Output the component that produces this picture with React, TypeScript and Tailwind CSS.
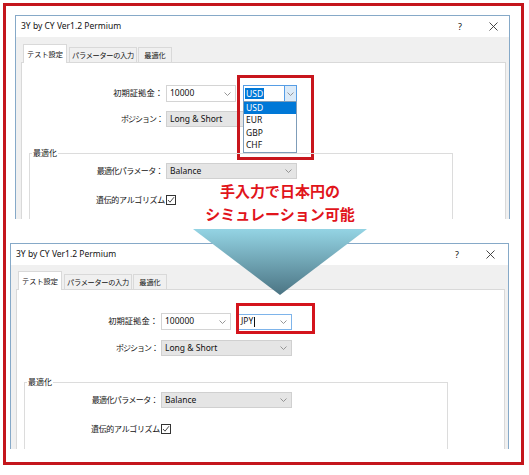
import React from 'react';

const FONT = "font-['Noto_Sans','Noto_Sans_CJK_JP',sans-serif]";

function Chevron() {
  return (
    <svg width="7" height="4" viewBox="0 0 7 4" className="shrink-0">
      <polyline points="0.5,0.5 3.5,3.5 6.5,0.5" fill="none" stroke="#8a8a8a" strokeWidth="0.9" />
    </svg>
  );
}

function CloseIcon() {
  return (
    <svg width="9" height="9" viewBox="0 0 9 9">
      <path d="M0.5 0.5 L8.5 8.5 M8.5 0.5 L0.5 8.5" stroke="#333" strokeWidth="0.9" fill="none" />
    </svg>
  );
}

function CheckBox() {
  return (
    <div className="flex h-[10px] w-[10px] shrink-0 items-center justify-center border border-[#333] bg-white">
      <svg width="8" height="8" viewBox="0 0 8 8">
        <polyline points="1,4 3,6.2 7,1.2" fill="none" stroke="#333" strokeWidth="0.9" />
      </svg>
    </div>
  );
}

function Combo({ value, width }: { value: string; width: string }) {
  return (
    <div className={`flex h-[17px] ${width} items-center justify-between border border-[#d4d4d4] bg-white pl-[3px] pr-[4px] text-[8.5px] text-[#111]`}>
      <span>{value}</span>
      <Chevron />
    </div>
  );
}

function Select({ value }: { value: string }) {
  return (
    <div className="flex h-[16px] w-[131px] items-center justify-between border border-[#d0d0d0] bg-[#e5e5e5] pl-[3px] pr-[4px] text-[8.5px] text-[#111]">
      <span>{value}</span>
      <Chevron />
    </div>
  );
}

function CurrencyOpen() {
  return (
    <div className="relative h-[17px] w-[54px]">
      <div className="flex h-full w-full items-center border border-[#569de5] bg-white text-[8.5px]">
        <span className="ml-[1px] bg-[#0078d7] px-[1px] leading-[11px] text-white">USD</span>
        <div className="ml-auto flex h-full w-[12px] items-center justify-center border-l border-[#569de5] bg-[#dbeaf8]">
          <Chevron />
        </div>
      </div>
      <div className="absolute left-0 top-[16px] flex w-[54px] flex-col border border-[#7f9db9] bg-white text-[8.5px] text-[#111]">
        <div className="h-[12px] bg-[#0078d7] pl-[2px] leading-[12px] text-white">USD</div>
        <div className="h-[12.5px] pl-[2px] leading-[12.5px]">EUR</div>
        <div className="h-[12.5px] pl-[2px] leading-[12.5px]">GBP</div>
        <div className="h-[12.5px] pl-[2px] leading-[12.5px]">CHF</div>
      </div>
      <div className="absolute left-[-6px] top-[-10px] h-[85px] w-[77px] border-[3px] border-[#c8161d]" />
    </div>
  );
}

function CurrencyJPY() {
  return (
    <div className="relative h-[16px] w-[54px]">
      <div className="flex h-full w-full items-center justify-between border border-[#7eb4ea] bg-white pl-[2px] pr-[4px] text-[8.5px] text-[#111]">
        <span className="flex items-center">
          JPY<span className="ml-[0.5px] inline-block h-[10px] w-px bg-[#111]" />
        </span>
        <Chevron />
      </div>
      <div className="absolute left-[-2px] top-[-11px] h-[31px] w-[79px] border-[3px] border-[#d4141c]" />
    </div>
  );
}

function Dialog({ variant }: { variant: 'top' | 'bottom' }) {
  const top = variant === 'top';
  return (
    <div
      className={`flex flex-col overflow-hidden border border-b-0 border-[#86a9c8] bg-[#f0f0f0] ${
        top ? 'ml-[9px] mt-[9px] h-[204px] w-[495px]' : 'ml-[4px] mt-[24px] h-[206px] w-[499px]'
      }`}
    >
      <div className={`flex h-[21px] shrink-0 items-center bg-white pl-[5px] text-[8.5px] text-[#111] ${top ? 'pr-[11px]' : 'pr-[13px]'}`}>
        <span>3Y by CY Ver1.2 Permium</span>
        <span className="ml-auto mr-[27px] text-[9px]">?</span>
        <CloseIcon />
      </div>
      <div className={`flex shrink-0 items-end whitespace-nowrap pl-[7px] text-[7.2px] text-[#111] ${top ? 'h-[25px]' : 'h-[24px]'}`}>
        <div className="relative z-10 -mb-px flex h-[19px] w-[44px] items-center justify-center border border-b-0 border-[#d9d9d9] bg-white">
          テスト設定
        </div>
        <div className="ml-[2px] flex h-[15px] w-[68px] items-center justify-center border border-b-0 border-[#d9d9d9] bg-[#f0f0f0] tracking-[-0.3px]">
          パラメーターの入力
        </div>
        <div className="ml-[1px] flex h-[15px] w-[34px] items-center justify-center border border-b-0 border-[#d9d9d9] bg-[#f0f0f0]">
          最適化
        </div>
      </div>
      <div className="ml-[5px] mr-[3px] flex flex-1 flex-col border border-[#d9d9d9] bg-white text-[8px] text-[#111]">
        <div className={`flex items-center ${top ? 'mt-[22px]' : 'mt-[23px]'}`}>
          <div className="w-[144px] pr-[3px] text-right text-[8.3px]">初期証拠金：</div>
          <Combo value={top ? '10000' : '100000'} width="w-[70px]" />
          <div className="ml-[7px]">{top ? <CurrencyOpen /> : <CurrencyJPY />}</div>
        </div>
        <div className={`flex items-center ${top ? 'mt-[9px]' : 'mt-[10px]'}`}>
          <div className="w-[144px] pr-[3px] text-right tracking-[-1px]">ポジション：</div>
          <Select value="Long & Short" />
        </div>
        <div className="relative ml-[7px] mt-[26px] h-[120px] w-[424px] shrink-0 border border-[#dcdcdc]">
          <span className="absolute left-[2px] top-[-7px] bg-white px-[1px] leading-[12px]">最適化</span>
          <div className="mt-[9px] flex items-center">
            <div className="w-[136px] pr-[3px] text-right tracking-[-0.6px]">最適化パラメータ：</div>
            <Select value="Balance" />
          </div>
          <div className="mt-[15px] flex items-center">
            <div className="w-[136px] pr-[1px] text-right tracking-[-0.3px]">遺伝的アルゴリズム</div>
            <CheckBox />
          </div>
        </div>
      </div>
    </div>
  );
}

export default function App() {
  return (
    <div className={`h-[475px] w-[529px] bg-white pl-[3px] pt-[3px] ${FONT}`}>
      <div className="relative h-[462px] w-[521px] border-[3px] border-[#c4161c] bg-white">
        <Dialog variant="top" />
        <Dialog variant="bottom" />
        <svg className="absolute left-[187px] top-[223px]" width="174" height="66" viewBox="0 0 174 66">
          <defs>
            <linearGradient id="tri" x1="0" y1="0" x2="0" y2="1">
              <stop offset="0" stopColor="#94d4e4" />
              <stop offset="1" stopColor="#4b7483" />
            </linearGradient>
          </defs>
          <polygon points="0,0 174,0 87,66" fill="url(#tri)" />
        </svg>
        <div className="absolute left-[194px] top-[174px] flex w-[160px] flex-col items-center text-[15px] font-bold leading-[23px] text-[#e1141b]">
          <span>手入力で日本円の</span>
          <span>シミュレーション可能</span>
        </div>
      </div>
    </div>
  );
}
